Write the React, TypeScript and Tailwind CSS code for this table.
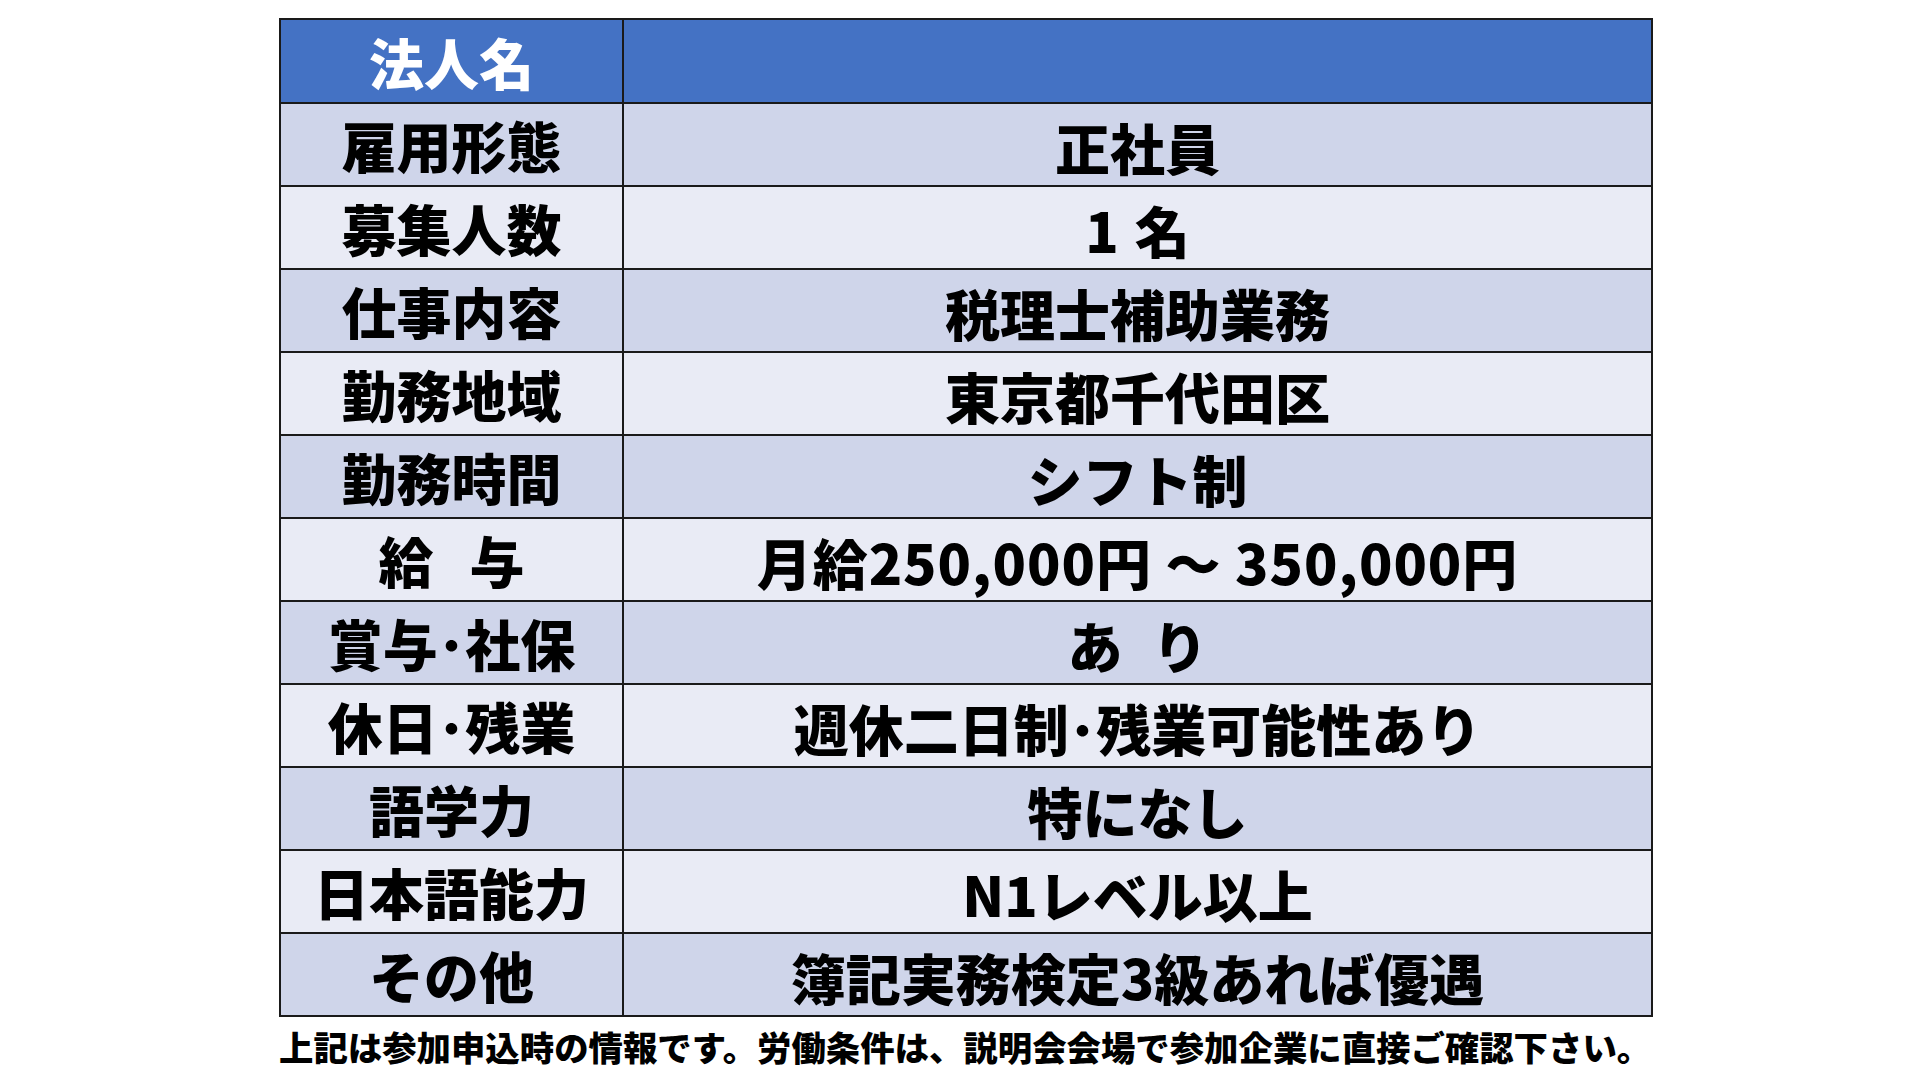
import type { ReactNode } from "react";

const rows: [ReactNode, ReactNode][] = [
  ["雇用形態", "正社員"],
  ["募集人数", <>1<span className="inline-block w-[16px]" />名</>],
  ["仕事内容", "税理士補助業務"],
  ["勤務地域", "東京都千代田区"],
  ["勤務時間", "シフト制"],
  [
    <>給<span className="inline-block w-[36px]" />与</>,
    <span className="tracking-[1px]">月給250,000円 ～ 350,000円</span>,
  ],
  ["賞与･社保", <>あ<span className="inline-block w-[30px]" />り</>],
  ["休日･残業", "週休二日制･残業可能性あり"],
  ["語学力", "特になし"],
  ["日本語能力", "N1レベル以上"],
  ["その他", "簿記実務検定3級あれば優遇"],
];

export default function App() {
  return (
    <div
      className="w-[1920px] h-[1080px] bg-white overflow-hidden"
      style={{ fontFamily: '"Noto Sans CJK JP", "Noto Sans", sans-serif' }}
    >
      <div className="ml-[279px] mt-[18px] w-[1374px]">
        <table className="w-full border-collapse table-fixed">
          <colgroup>
            <col className="w-[343px]" />
            <col />
          </colgroup>
          <tbody>
            <tr className="h-[84px] bg-[#4472c4]">
              <td className="border-2 border-[#1a1a1a] text-center text-[55px] font-black text-white leading-none">
                法人名
              </td>
              <td className="border-2 border-[#1a1a1a]"></td>
            </tr>
            {rows.map(([label, value], i) => (
              <tr
                key={i}
                className={i % 2 === 0 ? "h-[83px] bg-[#cfd5ea]" : "h-[83px] bg-[#e9ebf5]"}
              >
                <td className="border-2 border-[#1a1a1a] text-center text-[55px] font-black text-black leading-none">
                  {label}
                </td>
                <td className="border-2 border-[#1a1a1a] text-center text-[55px] font-black text-black leading-none pt-1 whitespace-nowrap">
                  {value}
                </td>
              </tr>
            ))}
          </tbody>
        </table>
        <p className="mt-[12px] text-[34.4px] font-black text-black leading-none whitespace-nowrap">
          上記は参加申込時の情報です。労働条件は、説明会会場で参加企業に直接ご確認下さい。
        </p>
      </div>
    </div>
  );
}
